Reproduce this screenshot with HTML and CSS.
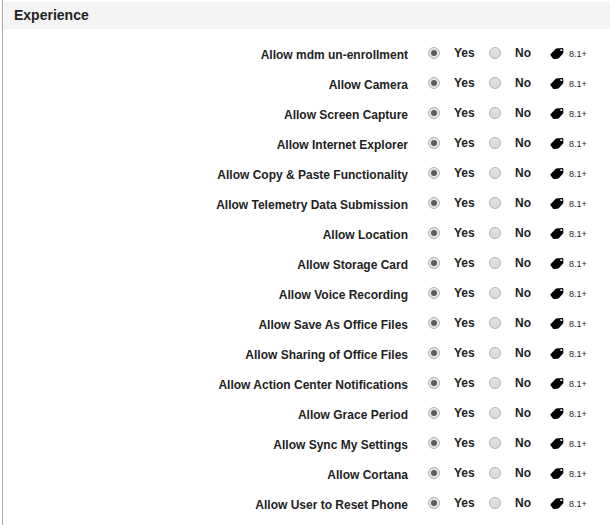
FILE: index.html
```html
<!DOCTYPE html>
<html lang="en">
<head>
<meta charset="utf-8">
<title>Experience</title>
<link rel="stylesheet" href="styles.css">
</head>
<body>
<svg class="icon-sprite" aria-hidden="true">
  <symbol id="tag" viewBox="0 0 14 11">
    <path fill-rule="evenodd" d="M6 .4 12.4 0Q13.3 0 13.3 .9V5.2L9 10Q8.2 10.8 7.2 10.8L4 11Q3.3 11 2.9 10.4L.5 7.2Q.1 6.5 .7 5.9ZM10.4 1.2V3H12.2V1.2Z"/>
  </symbol>
</svg>
<main class="panel">
  <h1 class="panel-title">Experience</h1>
  <form class="settings" id="settings"></form>
</main>
<script src="script.js"></script>
</body>
</html>
```
FILE: styles.css
```css
* {
  box-sizing: border-box;
}

body {
  margin: 0;
  background: #fff;
  color: #222;
  font: bold 12px/16px "Liberation Sans", Arial, sans-serif;
}

.icon-sprite {
  display: none;
}

.panel {
  min-height: 100vh;
  margin-left: 2px;
  padding: 2px 0 0 1px;
  border-left: 1px solid #a9a9a9;
}

.panel-title {
  margin: 0;
  padding: 0 10px;
  background: #f4f4f4;
  font-size: 14px;
  line-height: 27px;
}

.settings {
  padding: 9px 21px 0 10px;
}

.setting {
  display: flex;
  align-items: center;
  height: 30px;
}

.setting-name {
  flex: 1;
  padding-top: 3px;
  text-align: right;
}

.option {
  display: flex;
  align-items: center;
  gap: 14px;
  width: 61px;
}

.setting-name + .option {
  margin-left: 20px;
}

.option input {
  flex: none;
  appearance: none;
  width: 12px;
  height: 12px;
  margin: 0;
  border: 1px solid #b0b0b0;
  border-radius: 50%;
  background: linear-gradient(#e4e4e4, #d8d8d8);
}

.option input:checked {
  display: grid;
  place-items: center;
  background: #e6e6e6;
}

.option input:checked::before {
  content: "";
  width: 6px;
  height: 6px;
  border-radius: 50%;
  background: #5c5c5c;
}

.version {
  display: flex;
  align-items: center;
  gap: 5px;
  width: 39px;
  padding-top: 1px;
  font-size: 9px;
  font-weight: normal;
}

.tag-icon {
  flex: none;
  width: 14px;
  height: 11px;
}
```
FILE: script.js
```js
const settings = [
  "Allow mdm un-enrollment",
  "Allow Camera",
  "Allow Screen Capture",
  "Allow Internet Explorer",
  "Allow Copy & Paste Functionality",
  "Allow Telemetry Data Submission",
  "Allow Location",
  "Allow Storage Card",
  "Allow Voice Recording",
  "Allow Save As Office Files",
  "Allow Sharing of Office Files",
  "Allow Action Center Notifications",
  "Allow Grace Period",
  "Allow Sync My Settings",
  "Allow Cortana",
  "Allow User to Reset Phone"
];

document.getElementById("settings").innerHTML = settings.map((name, i) => `
  <div class="setting" role="radiogroup" aria-labelledby="name-${i}">
    <span class="setting-name" id="name-${i}">${name.replace("&", "&amp;")}</span>
    <label class="option"><input type="radio" name="setting-${i}" value="yes" checked>Yes</label>
    <label class="option"><input type="radio" name="setting-${i}" value="no">No</label>
    <span class="version"><svg class="tag-icon" aria-hidden="true"><use href="#tag"/></svg>8.1+</span>
  </div>`).join("");
```
